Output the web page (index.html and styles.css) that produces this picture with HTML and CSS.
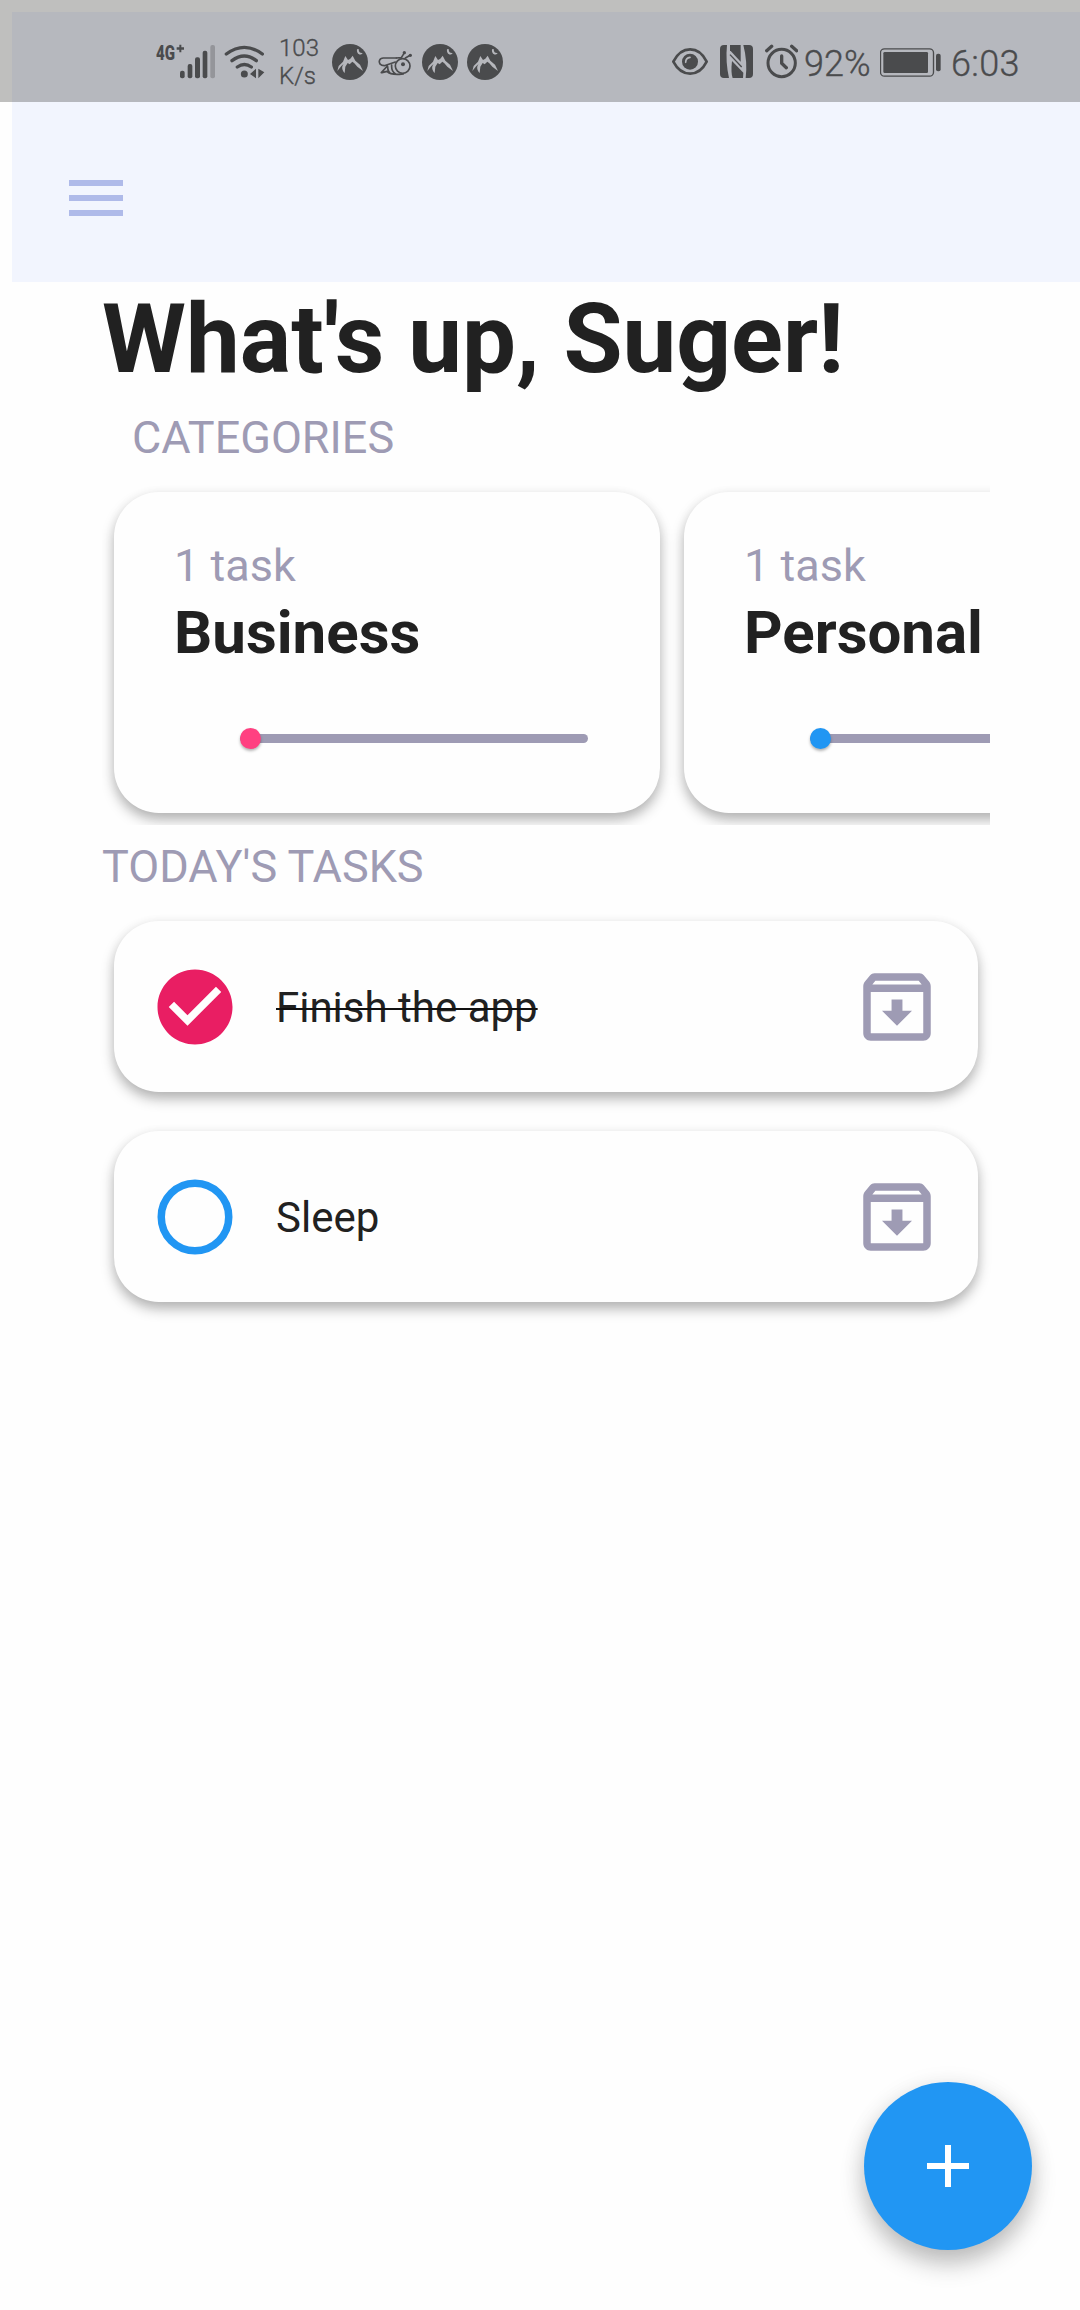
FILE: index.html
```html
<!DOCTYPE html>
<html lang="en">
<head>
<meta charset="utf-8">
<title>Tasks</title>
<link rel="stylesheet" href="styles.css">
</head>
<body>
<svg class="defs" width="0" height="0">
  <symbol id="mountain" viewBox="36 0 108 210">
    <circle cx="90" cy="96" r="54" fill="#4a4b4d"/>
    <path fill="#b6b7bc" d="M52 123L56 108L69 95L76 78L84 90L91 86L98 77L106 92L120 104L129 123L112 110L103 100L97 95L89 103L83 99L76 110L74 129C64 118 64 106 75 98L64 108ZM111 58C109 72 121 79 128 69C121 70 116 67 116 57Z"/>
  </symbol>
  <symbol id="archive" viewBox="0 0 24 24">
    <path fill="#9e9bb4" d="M20.54 5.23l-1.39-1.68C18.88 3.21 18.47 3 18 3H6c-.47 0-.88.21-1.16.55L3.46 5.23C3.17 5.57 3 6.02 3 6.5V19c0 1.1.9 2 2 2h14c1.1 0 2-.9 2-2V6.5c0-.48-.17-.93-.46-1.27zM6.24 5h11.52l.83 1H5.42l.82-1zM5 19V8h14v11H5zm8.45-9h-2.9v3H8l4 4 4-4h-2.55z"/>
  </symbol>
</svg>

<div class="status">
  <svg class="signal" viewBox="468 90 180 210" fill="#4a4b4d">
    <text class="net" x="468" y="180" textLength="57" lengthAdjust="spacingAndGlyphs">4G</text>
    <path d="M530 142h8v-8h6v8h8v7h-8v8h-6v-8h-8z"/>
    <rect x="540" y="212" width="14" height="23" rx="6"/>
    <rect x="563" y="192" width="14" height="43" rx="6"/>
    <rect x="585" y="172" width="15" height="63" rx="6"/>
    <rect x="608" y="152" width="14" height="83" rx="6"/>
    <rect x="631" y="135" width="14" height="100" rx="6" fill="#94959a"/>
  </svg>
  <svg class="wifi" viewBox="672 90 123 210" fill="#4a4b4d">
    <path fill="none" stroke="#4a4b4d" stroke-width="10" stroke-linecap="round" d="M679 162Q733 122 787 162M696 182Q733 154 769 182M712 201Q733 186 754 201"/>
    <circle cx="733" cy="222" r="10.5"/>
    <path d="M750 222L768 206V235ZM775 206L793 217L775 235Z"/>
  </svg>
  <div class="speed">103<br>K/s</div>
  <svg class="badge" viewBox="36 0 108 210"><use href="#mountain" x="36" y="0" width="108" height="210"/></svg>
  <svg class="bee" viewBox="174 0 105 210" fill="none" stroke="#4a4b4d" stroke-width="5" stroke-linecap="round" stroke-linejoin="round">
    <path d="M229 84H190C178 84 175 96 181 103Q184 107 193 107L226 96M184 128L202 108M186 128L201 124C213 137 236 133 250 132M203 110C203 121 207 129 216 132M215 105C214 118 219 128 227 132"/>
    <circle cx="248" cy="108" r="22"/>
    <path d="M229 84L244 83L252 70M256 84L268 77"/>
    <circle cx="249" cy="103" r="6" fill="#4a4b4d" stroke="none"/>
    <circle cx="253" cy="68" r="5" fill="#4a4b4d" stroke="none"/>
    <circle cx="271" cy="76" r="5" fill="#4a4b4d" stroke="none"/>
  </svg>
  <svg class="badge" viewBox="36 0 108 210"><use href="#mountain" x="36" y="0" width="108" height="210"/></svg>
  <svg class="badge" viewBox="36 0 108 210"><use href="#mountain" x="36" y="0" width="108" height="210"/></svg>
  <div class="spacer"></div>
  <svg class="eye" viewBox="66 0 108 210">
    <path fill="none" stroke="#4a4b4d" stroke-width="8" stroke-linejoin="round" d="M70 95C95 46 146 46 170 95C146 143 95 143 70 95Z"/>
    <circle cx="120" cy="95" r="24" fill="#4a4b4d"/>
    <path fill="none" stroke="#b6b7bc" stroke-width="5" stroke-linecap="round" d="M107 97C107 89 112 83 120 82"/>
  </svg>
  <svg class="nfc" viewBox="210 0 99 210" fill="#4a4b4d">
    <path d="M222 45H231Q226 95 237 144H222Q210 144 210 132V57Q210 45 222 45Z"/>
    <path d="M280 45H297Q309 45 309 57V132Q309 144 297 144H287Q293 95 280 45Z"/>
    <path d="M240 45H272V95L240 61Z"/>
    <path d="M246 93L280 128L279 144H248Q242 130 246 93Z"/>
    <path fill="none" stroke="#4a4b4d" stroke-width="4" d="M240 74L275 111"/>
  </svg>
  <svg class="alarm" viewBox="345 0 99 210" fill="none" stroke="#4a4b4d" stroke-linecap="round" stroke-linejoin="round">
    <circle cx="395" cy="99" r="41" stroke-width="9"/>
    <path stroke-width="10" d="M395 78V100L409 113M350 62L365 49M425 49L440 62"/>
  </svg>
  <div class="percent">92%</div>
  <svg class="battery" viewBox="690 0 183 210">
    <rect x="691.5" y="56.500" width="159" height="82" rx="12" fill="none" stroke="#4a4b4d" stroke-width="4"/>
    <rect x="700" y="66" width="134" height="63" rx="4" fill="#4a4b4d"/>
    <rect x="858" y="71" width="14" height="53" rx="6" fill="#4a4b4d"/>
  </svg>
  <div class="clock">6:03</div>
</div>

<header class="appbar">
  <div class="menu"><i></i><i></i><i></i></div>
</header>

<main class="content">
  <h1 class="title">What's up, Suger!</h1>
  <h2 class="label indent">CATEGORIES</h2>
  <section class="categories">
    <article class="card category">
      <p class="count">1 task</p>
      <h3 class="name">Business</h3>
      <div class="slider"><span class="thumb pink"></span></div>
    </article>
    <article class="card category">
      <p class="count">1 task</p>
      <h3 class="name">Personal</h3>
      <div class="slider"><span class="thumb blue"></span></div>
    </article>
  </section>
  <h2 class="label">TODAY'S TASKS</h2>
  <section class="tasks">
    <article class="card task">
      <svg class="icon" viewBox="0 0 24 24"><path fill="#e91e63" d="M12 2C6.480 2 2 6.480 2 12s4.480 10 10 10 10-4.480 10-10S17.520 2 12 2zm-2 15l-5-5 1.410-1.410L10 14.170l7.590-7.590L19 8l-9 9z"/></svg>
      <span class="text done">Finish the app</span>
      <svg class="icon"><use href="#archive"/></svg>
    </article>
    <article class="card task">
      <svg class="icon" viewBox="0 0 24 24"><circle cx="12" cy="12" r="9" fill="none" stroke="#2196f3" stroke-width="2"/></svg>
      <span class="text">Sleep</span>
      <svg class="icon"><use href="#archive"/></svg>
    </article>
  </section>
</main>

<div class="fab">
  <svg width="72" height="72" viewBox="0 0 24 24"><path fill="#fff" d="M19 13h-6v6h-2v-6H5v-2h6V5h2v6h6v2z"/></svg>
</div>
</body>
</html>
```
FILE: styles.css
```css
* { box-sizing: border-box; margin: 0; padding: 0; }
body {
  position: relative;
  width: 1080px;
  height: 2310px;
  overflow: hidden;
  background: #fefefe;
  color: #212121;
  font-family: Roboto, sans-serif;
  display: flex;
  flex-direction: column;
}
.defs { position: absolute; }

/* translucent system bar over the app bar */
.status {
  position: absolute;
  top: 0;
  left: 0;
  width: 1080px;
  height: 102px;
  padding: 30px 0 0 156px;
  display: flex;
  align-items: flex-start;
  background: rgba(4, 2, 0, .25);
  color: #4a4b4d;
}
.status svg { height: 70px; flex: none; }
.net { font: 900 63px Roboto, sans-serif; }
.signal { width: 60px; }
.wifi { width: 41px; margin-left: 8px; }
.speed, .percent, .clock { font-weight: 300; -webkit-text-stroke: .35px #4a4b4d; }
.speed { width: 40px; margin: 4px 0 0 14px; font-size: 24px; line-height: 28px; }
.badge { width: 36px; margin-left: 9px; }
.speed + .badge { margin-left: 13px; }
.bee { width: 35px; margin-left: 10px; }
.spacer { flex: 1; }
.eye { width: 36px; }
.nfc { width: 33px; margin-left: 12px; }
.alarm { width: 33px; margin-left: 12px; }
.percent { width: 78px; margin-left: 6px; padding-top: 13px; font-size: 36px; line-height: 42px; }
.battery { width: 61px; margin-left: -2px; }
.clock { width: 129px; margin-left: 10px; padding-top: 13px; font-size: 36px; line-height: 42px; letter-spacing: .3px; }

.appbar {
  height: 270px;
  margin: 12px 0 0 12px;
  padding: 168px 0 0 57px;
  background: #f2f5fe;
}
.menu { display: flex; flex-direction: column; gap: 9px; width: 54px; }
.menu i { height: 6px; background: #afbae9; }

.content { width: 888px; margin-left: 102px; }
.title { font-size: 96px; line-height: 114px; font-weight: 700; white-space: nowrap; }
.label { font-size: 45px; line-height: 54px; font-weight: 400; color: #9e9bb4; }
.indent { margin: 15px 0 15px 30px; }

.card {
  border-radius: 45px;
  background: #fefefe;
  box-shadow: 0 7px 13px rgba(0, 0, 0, .28), 0 2px 12px rgba(0, 0, 0, .05);
}
.categories {
  display: flex;
  gap: 24px;
  height: 345px;
  padding: 12px;
  margin-bottom: 15px;
  overflow: hidden;
}
.category { flex: none; width: 546px; height: 321px; padding: 47px 60px 0; }
.count { font-size: 45px; line-height: 54px; color: #9e9bb4; }
.name { font-size: 60px; line-height: 72px; font-weight: 700; margin-top: 4px; }
.slider {
  display: flex;
  align-items: center;
  width: 348px;
  height: 9px;
  margin: 65px 0 0 66px;
  border-radius: 5px;
  background: #9e9bb4;
}
.thumb { width: 21px; height: 21px; border-radius: 50%; box-shadow: 0 2px 3px rgba(0, 0, 0, .3); }
.pink { background: #ff4081; }
.blue { background: #2196f3; }

.tasks { display: flex; flex-direction: column; gap: 39px; padding: 27px 12px 0; }
.task { display: flex; align-items: center; height: 171px; padding: 0 36px; }
.icon { width: 90px; height: 90px; flex: none; }
.text { font-size: 42px; line-height: 50px; margin: 2px auto 0 36px; }
.done { text-decoration: line-through; text-decoration-color: #111; text-decoration-thickness: 2px; }

.fab {
  position: absolute;
  left: 864px;
  top: 2082px;
  width: 168px;
  height: 168px;
  border-radius: 50%;
  display: flex;
  align-items: center;
  justify-content: center;
  background: #2196f3;
  box-shadow: 0 14px 24px rgba(0, 0, 0, .23), 0 3px 24px rgba(0, 0, 0, .08);
}
.fab svg { width: 72px; height: 72px; }
```
